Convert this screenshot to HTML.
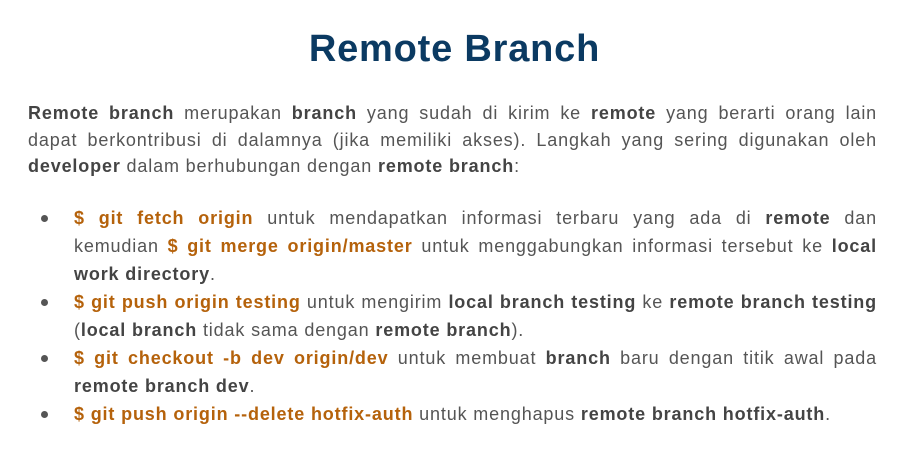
<!DOCTYPE html>
<html><head><meta charset="utf-8"><style>
body{margin:0;background:#fff;width:909px;height:456px;overflow:hidden;font-family:"Liberation Sans",sans-serif;color:#555;}
h1{margin:0;position:absolute;top:28px;left:0;width:909px;text-align:center;font-size:38px;font-weight:bold;color:#0b3a62;letter-spacing:0.8px;}
.j{display:block;text-align:justify;text-align-last:justify;white-space:nowrap;}
.l{display:block;white-space:nowrap;}
p{position:absolute;top:100px;left:28px;width:849px;margin:0;font-size:18px;line-height:26.5px;letter-spacing:0.85px;}
ul{position:absolute;top:204px;left:28px;width:849px;margin:0;padding:0 0 0 46px;box-sizing:border-box;list-style:none;font-size:18px;line-height:28px;letter-spacing:0.85px;}
li{position:relative;}
li:before{content:"";position:absolute;left:-33px;top:11px;width:7px;height:7px;border-radius:50%;background:#555;}
b{color:#444;}
.o{color:#b5620b;font-weight:bold;}
</style></head><body>
<h1>Remote Branch</h1>
<p><span class="j"><b>Remote branch</b> merupakan <b>branch</b> yang sudah di kirim ke <b>remote</b> yang berarti orang lain</span><span class="j">dapat berkontribusi di dalamnya (jika memiliki akses). Langkah yang sering digunakan oleh</span><span class="l"><b>developer</b> dalam berhubungan dengan <b>remote branch</b>:</span></p>
<ul>
<li><span class="j"><span class="o">$ git fetch origin</span> untuk mendapatkan informasi terbaru yang ada di <b>remote</b> dan</span><span class="j">kemudian <span class="o">$ git merge origin/master</span> untuk menggabungkan informasi tersebut ke <b>local</b></span><span class="l"><b>work directory</b>.</span></li>
<li><span class="j"><span class="o">$ git push origin testing</span> untuk mengirim <b>local branch testing</b> ke <b>remote branch testing</b></span><span class="l">(<b>local branch</b> tidak sama dengan <b>remote branch</b>).</span></li>
<li><span class="j"><span class="o">$ git checkout -b dev origin/dev</span> untuk membuat <b>branch</b> baru dengan titik awal pada</span><span class="l"><b>remote branch dev</b>.</span></li>
<li><span class="l"><span class="o">$ git push origin --delete hotfix-auth</span> untuk menghapus <b>remote branch hotfix-auth</b>.</span></li>
</ul>
</body></html>
